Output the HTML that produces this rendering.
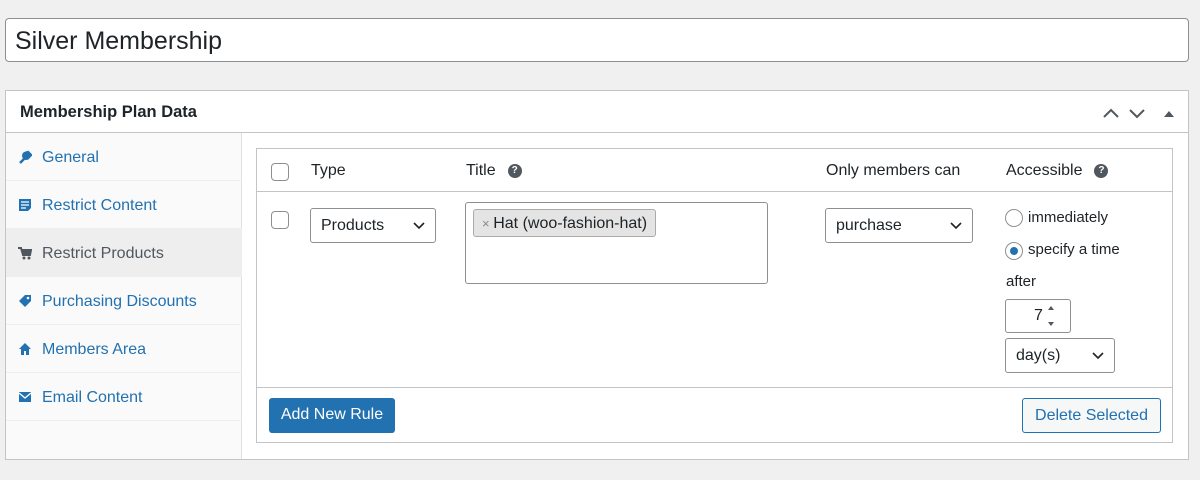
<!DOCTYPE html>
<html><head><style>
*{box-sizing:border-box}
body{margin:0;width:1200px;height:480px;background:#f0f0f1;font-family:"Liberation Sans",sans-serif;color:#1d2327;position:relative;overflow:hidden}
.a{position:absolute}
.title{left:5px;top:18px;width:1184px;height:44px;background:#fff;border:1px solid #8c8f94;border-radius:4px;font-size:25px;padding:8px 9px;}
.panel{left:5px;top:90px;width:1184px;height:370px;background:#fff;border:1px solid #c3c4c7}
.hdr{left:0;top:0;width:1182px;height:42px;border-bottom:1px solid #c3c4c7;font-weight:bold;font-size:16.5px;padding:12px 14px}
.side{left:0;top:42px;width:236px;height:326px;background:#fafafa;border-right:1px solid #e0e0e0}
.it{position:absolute;left:0;width:236px;height:48px;border-bottom:1px solid #eee;color:#2271b1;font-size:16px;padding:16px 0 0 36px}
.it svg{position:absolute;left:12px;top:17px}
.act{background:#eee;color:#50575e}
.tbl{left:250px;top:57px;width:917px;height:295px;border:1px solid #c3c4c7}
.cb{position:absolute;width:18px;height:18px;border:1px solid #8c8f94;border-radius:4px;background:#fff}
.th{position:absolute;top:13px;font-size:16px}
.q{display:inline-block;width:14px;height:14px;border-radius:50%;background:#50575e;color:#fff;font-size:10px;font-weight:bold;text-align:center;line-height:14px;vertical-align:middle;margin-left:12px}
.sel{position:absolute;height:35px;border:1px solid #8c8f94;border-radius:3px;background:#fff;font-size:16px;padding:8px 10px}
.sel svg{position:absolute;right:10px;top:13px}
.btn{position:absolute;height:35px;border-radius:3px;font-size:16px;padding:8px 0;white-space:nowrap;text-align:center}
</style></head><body>
<div class="a title">Silver Membership</div>
<div class="a panel">
 <div class="a hdr">Membership Plan Data
  <svg class="a" style="left:1096px;top:15px" width="80" height="14"><path d="M2 11 L9 4 L16 11" stroke="#50575e" stroke-width="2" fill="none"/><path d="M28 4 L35 11 L42 4" stroke="#50575e" stroke-width="2" fill="none"/><path d="M62 11 L67 5 L72 11Z" fill="#50575e"/></svg>
 </div>
 <div class="a side">
  <div class="it" style="top:0"><svg width="14" height="14"><path d="M2 13 L8 7 M7 3 a3 3 0 1 0 4 4 L13 5 L10 2Z" stroke="#2271b1" stroke-width="2.5" fill="#2271b1"/></svg>General</div>
  <div class="it" style="top:48px"><svg width="14" height="14"><path d="M1 1h12v9l-3 3H1Z" fill="#2271b1"/><path d="M3 4h8M3 7h8M3 10h5" stroke="#fff" stroke-width="1.3"/></svg>Restrict Content</div>
  <div class="it act" style="top:96px"><svg width="14" height="14"><path d="M0 2h3l2 7h7l1-5H4" stroke="#50575e" stroke-width="2" fill="#50575e"/><circle cx="6" cy="12" r="1.5" fill="#50575e"/><circle cx="11" cy="12" r="1.5" fill="#50575e"/></svg>Restrict Products</div>
  <div class="it" style="top:144px"><svg width="14" height="14"><path d="M7 1h6v6l-6 6-6-6Z" fill="#2271b1"/><circle cx="10" cy="4" r="1.3" fill="#fff"/></svg>Purchasing Discounts</div>
  <div class="it" style="top:192px"><svg width="14" height="14"><path d="M7 1 L13 7 H11 V13 H8 V9 H6 V13 H3 V7 H1Z" fill="#2271b1"/></svg>Members Area</div>
  <div class="it" style="top:240px"><svg width="14" height="14"><rect x="1" y="2" width="12" height="10" fill="#2271b1"/><path d="M1 3 L7 8 L13 3" stroke="#fff" stroke-width="1.4" fill="none"/></svg>Email Content</div>
 </div>
 <div class="a tbl">
  <div class="a" style="left:0;top:42px;width:915px;border-top:1px solid #c3c4c7"></div>
  <div class="a" style="left:0;top:238px;width:915px;border-top:1px solid #c3c4c7"></div>
  <div class="cb" style="left:14px;top:14px"></div>
  <div class="th" style="left:54px">Type</div>
  <div class="th" style="left:209px">Title<span class="q">?</span></div>
  <div class="th" style="left:569px">Only members can</div>
  <div class="th" style="left:749px">Accessible<span class="q">?</span></div>
  <div class="cb" style="left:14px;top:62px"></div>
  <div class="sel" style="left:53px;top:59px;width:126px">Products<svg width="12" height="8"><path d="M1 1l5 5 5-5" stroke="#1d2327" stroke-width="1.6" fill="none"/></svg></div>
  <div class="a" style="left:208px;top:53px;width:303px;height:82px;border:1px solid #8c8f94;border-radius:3px"><div class="a" style="left:7px;top:6px;height:28px;border:1px solid #aaa;border-radius:3px;background:#e4e4e4;font-size:16px;padding:5px 8px;white-space:nowrap"><span style="color:#888;font-size:13px">× </span>Hat (woo-fashion-hat)</div></div>
  <div class="sel" style="left:568px;top:59px;width:148px">purchase<svg width="12" height="8"><path d="M1 1l5 5 5-5" stroke="#1d2327" stroke-width="1.6" fill="none"/></svg></div>
  <div class="a" style="left:748px;top:60px;width:18px;height:18px;border:1px solid #8c8f94;border-radius:50%"></div>
  <div class="a" style="left:771px;top:60px;font-size:15px">immediately</div>
  <div class="a" style="left:748px;top:93px;width:18px;height:18px;border:1px solid #8c8f94;border-radius:50%"><div class="a" style="left:4px;top:4px;width:8px;height:8px;border-radius:50%;background:#2271b1"></div></div>
  <div class="a" style="left:771px;top:92px;font-size:15px">specify a time</div>
  <div class="a" style="left:749px;top:124px;font-size:15px">after</div>
  <div class="a" style="left:748px;top:150px;width:66px;height:34px;border:1px solid #8c8f94;border-radius:3px;font-size:16px;padding:7px 0 0 28px">7<svg class="a" style="left:40px;top:4px" width="10" height="24"><path d="M2 6l3-4 3 4Z M2 18l3 4 3-4Z" fill="#50575e"/></svg></div>
  <div class="sel" style="left:748px;top:189px;width:110px">day(s)<svg width="12" height="8"><path d="M1 1l5 5 5-5" stroke="#1d2327" stroke-width="1.6" fill="none"/></svg></div>
  <div class="btn" style="left:12px;top:249px;width:126px;background:#2271b1;color:#fff">Add New Rule</div>
  <div class="btn" style="left:765px;top:249px;width:139px;border:1px solid #2271b1;color:#2271b1;background:#f6f7f7">Delete Selected</div>
 </div>
</div>
</body></html>
